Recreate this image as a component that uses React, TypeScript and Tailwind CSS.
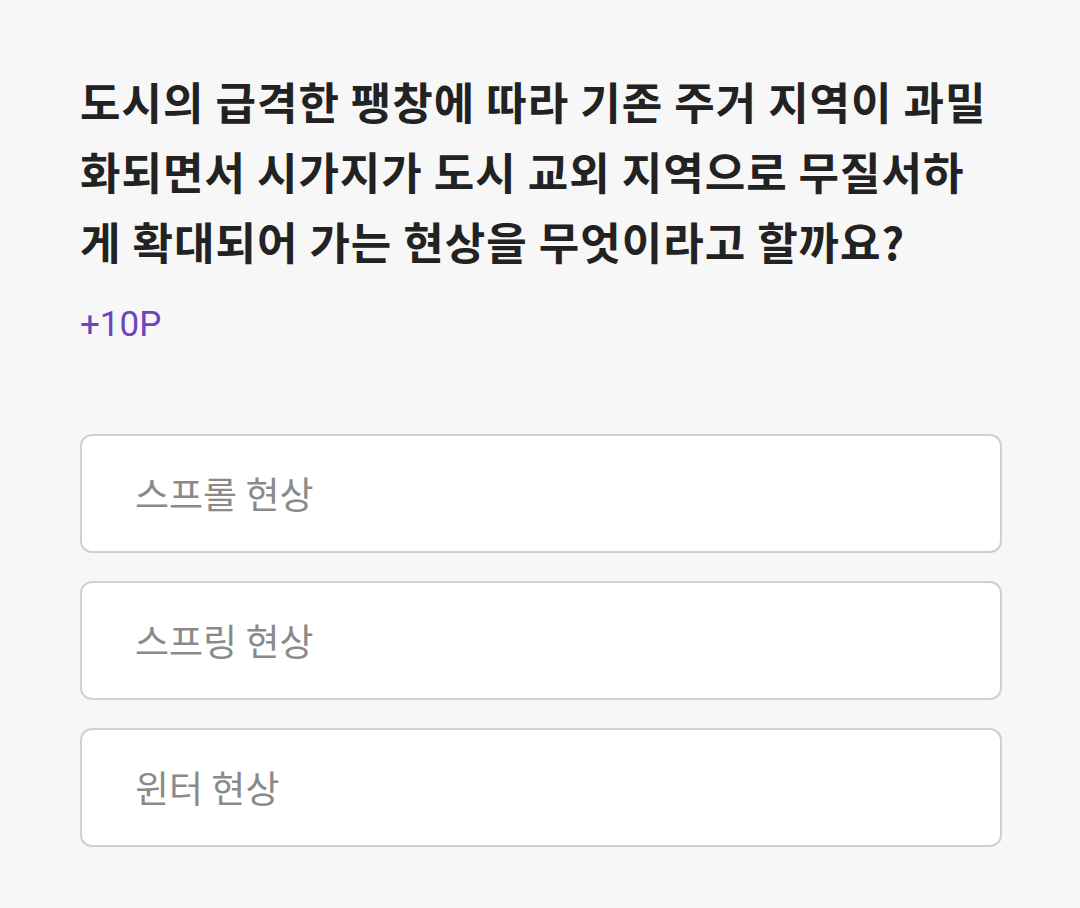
export default function App() {
  const options = ["스프롤 현상", "스프링 현상", "윈터 현상"];
  return (
    <div className="min-h-[908px] w-[1080px] bg-[#f7f7f7] px-[80px] pt-[66px] font-['Noto_Sans_CJK_KR',sans-serif]">
      <h1 className="whitespace-nowrap text-[44px] font-bold leading-[70px] tracking-[1px] text-[#222222]">
        도시의 급격한 팽창에 따라 기존 주거 지역이 과밀
        <br />
        화되면서 시가지가 도시 교외 지역으로 무질서하
        <br />
        게 확대되어 가는 현상을 무엇이라고 할까요?
      </h1>
      <div className="mt-[29px] font-['Roboto',sans-serif] text-[35px] leading-[40px] text-[#6c45bb]">+10P</div>
      <div className="mt-[89px] flex w-[922px] flex-col gap-[28px]">
        {options.map((o) => (
          <div
            key={o}
            className="flex h-[119px] items-center rounded-[12px] border-2 border-[#d0d0d0] bg-white pl-[53px] text-[37px] text-[#8a8a8a]"
          >
            {o}
          </div>
        ))}
      </div>
    </div>
  );
}
